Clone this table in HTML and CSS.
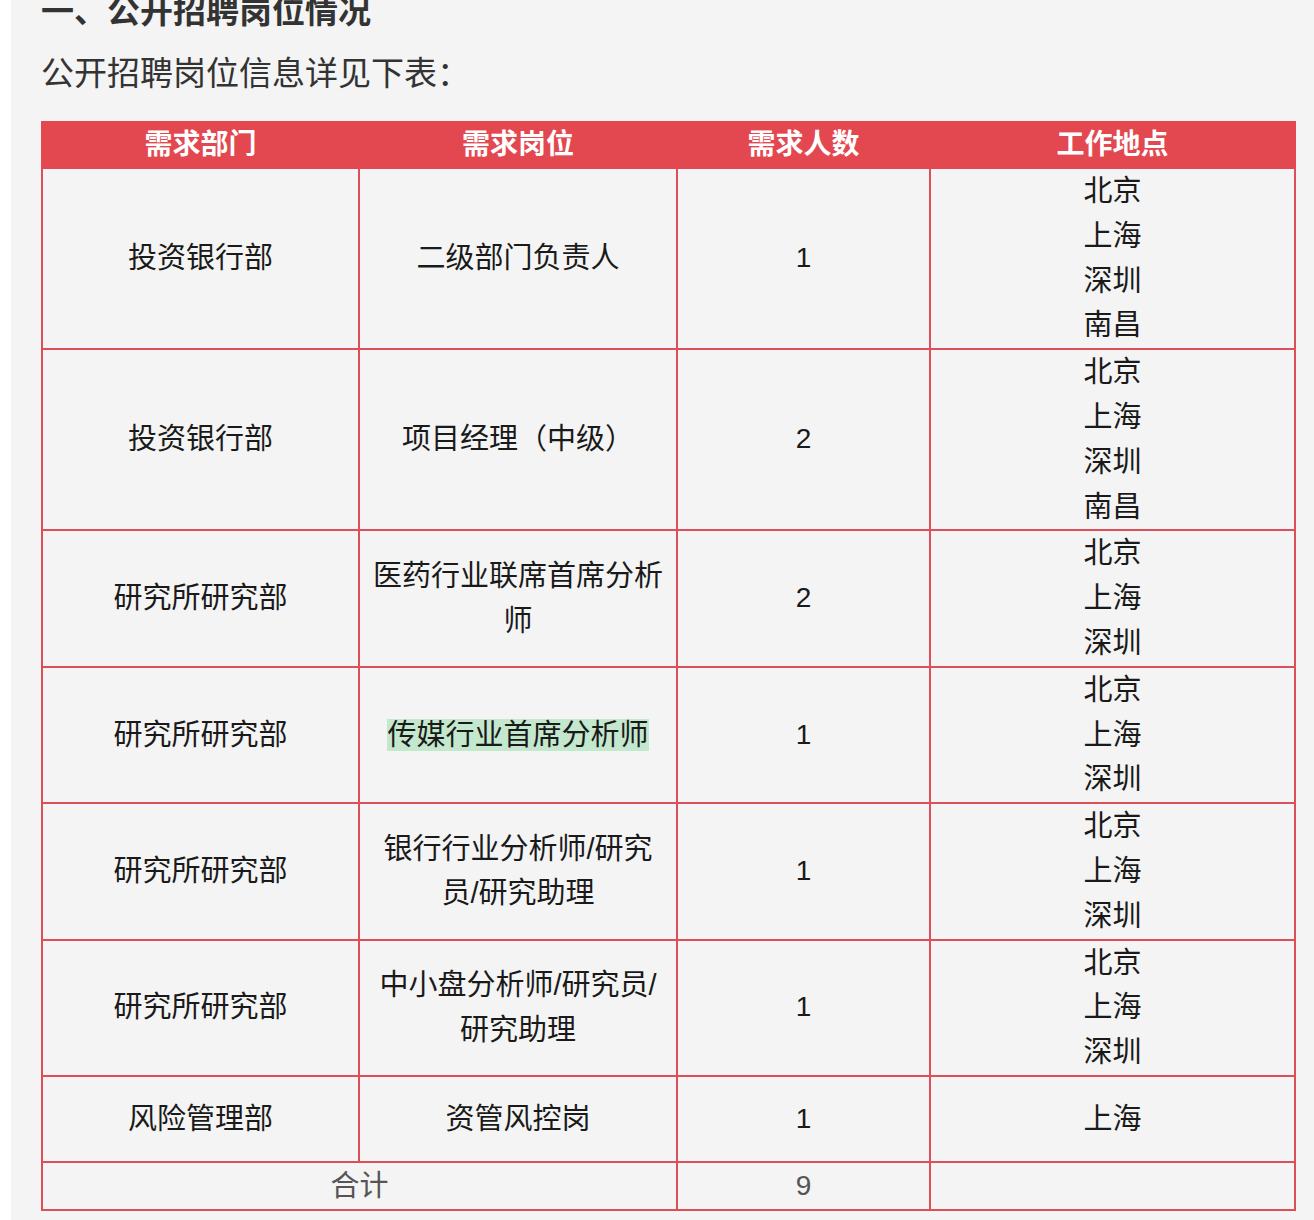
FILE: index.html
```html
<!DOCTYPE html>
<html lang="zh-CN">
<head>
<meta charset="utf-8">
<title>公开招聘岗位情况</title>
<link rel="stylesheet" href="styles.css">
</head>
<body>
<div class="page">
  <h2 class="title">一、公开招聘岗位情况</h2>
  <p class="intro">公开招聘岗位信息详见下表：</p>
  <table class="jobs">
    <colgroup>
      <col class="c1"><col class="c2"><col class="c3"><col class="c4">
    </colgroup>
    <thead>
      <tr><th>需求部门</th><th>需求岗位</th><th>需求人数</th><th>工作地点</th></tr>
    </thead>
    <tbody>
      <tr><td>投资银行部</td><td>二级部门负责人</td><td class="num">1</td><td>北京<br>上海<br>深圳<br>南昌</td></tr>
      <tr><td>投资银行部</td><td>项目经理（中级）</td><td class="num">2</td><td>北京<br>上海<br>深圳<br>南昌</td></tr>
      <tr><td>研究所研究部</td><td>医药行业联席首席分析师</td><td class="num">2</td><td>北京<br>上海<br>深圳</td></tr>
      <tr><td>研究所研究部</td><td><span class="hl">传媒行业首席分析师</span></td><td class="num">1</td><td>北京<br>上海<br>深圳</td></tr>
      <tr><td>研究所研究部</td><td>银行行业分析师/研究员/研究助理</td><td class="num">1</td><td>北京<br>上海<br>深圳</td></tr>
      <tr><td>研究所研究部</td><td>中小盘分析师/研究员/研究助理</td><td class="num">1</td><td>北京<br>上海<br>深圳</td></tr>
      <tr class="tall"><td>风险管理部</td><td>资管风控岗</td><td class="num">1</td><td>上海</td></tr>
      <tr class="total"><td colspan="2">合计</td><td class="num">9</td><td></td></tr>
    </tbody>
  </table>
</div>
</body>
</html>
```
FILE: styles.css
```css
html, body {
  margin: 0;
  padding: 0;
  background: #ffffff;
}
body {
  font-family: "Liberation Sans", "Noto Sans CJK SC", sans-serif;
  color: #222;
}
.page {
  margin-left: 11px;
  background: #f4f4f4;
  min-height: 1220px;
  padding: 0 20px 0 30px;
  overflow: hidden;
}
.title {
  margin: -10px 0 0 0;
  font-size: 33px;
  line-height: 44px;
  font-weight: bold;
  color: #333;
}
.intro {
  margin: 18px 0 0 0;
  font-size: 33px;
  line-height: 44px;
  color: #333;
}
.jobs {
  margin-top: 25px;
  width: 1253px;
  border-collapse: collapse;
  table-layout: fixed;
  font-size: 29px;
  line-height: 44.8px;
}
.c1 { width: 317px; }
.c2 { width: 318px; }
.c3 { width: 253px; }
.c4 { width: 365px; }
.jobs th {
  background: #e34850;
  color: #fff;
  font-weight: bold;
  font-size: 28px;
  line-height: 44px;
  height: 44px;
  padding: 0;
  border: 2px solid #e34850;
  text-align: center;
}
.jobs td {
  border: 2px solid #dc4f58;
  text-align: center;
  vertical-align: middle;
  padding: 0 10px;
  color: #1a1a1a;
}
.jobs .num {
  font-size: 28px;
}
.hl {
  background: #c4e8cd;
}
.tall td {
  height: 84px;
}
.total td {
  color: #555;
  height: 46px;
}
```
